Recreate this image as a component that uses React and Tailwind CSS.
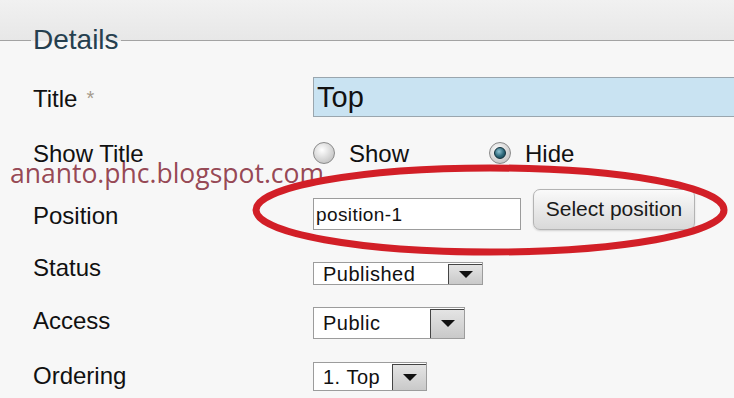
import React from 'react';

// ── Small form widgets ──────────────────────────────────────────────────────
function Radio({ checked }) {
  return (
    <span className="w-[22px] h-[22px] rounded-full border border-[#8a8a8a] bg-[radial-gradient(circle_at_40%_35%,#ffffff,#d6d6d6_55%,#b4b4b4)] flex items-center justify-center shrink-0">
      {checked && (
        <span className="w-[12px] h-[12px] rounded-full bg-[radial-gradient(circle_at_40%_35%,#8fc3d2,#2b6678_55%,#123a48)] border border-[#0f2f3a]" />
      )}
    </span>
  );
}

function Select({ value, width, height }) {
  return (
    <div
      className="flex items-stretch border border-[#9c9c9c] bg-white"
      style={{ width, height }}
    >
      <span className="flex-1 flex items-center pl-[9px] text-[20px] leading-none tracking-[0.5px] text-[#111]">
        {value}
      </span>
      <span className="w-[34px] flex items-center justify-center border-l border-t border-[#444] bg-[linear-gradient(#e4e4e4,#c9c9c9)] m-px mr-0 mb-0 border-r-0">
        <svg width="14" height="8" viewBox="0 0 14 8">
          <path d="M0 0 H14 L7 7 Z" fill="#111" />
        </svg>
      </span>
    </div>
  );
}

const label = 'w-[280px] shrink-0 text-[24px] leading-[28px] text-[#111]';

export default function App() {
  return (
    <div className="relative w-[734px] h-[398px] overflow-hidden bg-[#f7f7f7] font-['Liberation_Sans',Arial,sans-serif]">
      {/* ── Legend header ── */}
      <div className="h-[41px] flex items-end bg-[linear-gradient(#f1f1f1,#e7e7e7)]">
        <div className="w-[31px] h-px bg-[#a3a3a3]" />
        <div className="px-[2px] -mb-[15px] text-[28px] leading-[32px] text-[#26404f]">Details</div>
        <div className="flex-1 h-px bg-[#a3a3a3]" />
      </div>

      {/* ── Form rows ── */}
      <div className="pl-[33px] pt-[36px]">
        {/* Title */}
        <div className="h-[63px] flex items-start">
          <div className={label + ' mt-[8px] flex'}>
            Title
            <span className="ml-[9px] mt-[3px] text-[20px] leading-none text-[#a59a8c]">*</span>
          </div>
          <div className="flex-1 h-[40px] -mr-[2px] border border-[#9aa6ae] bg-[#c9e3f2] pl-[3px] flex items-center text-[29px] leading-none text-[#111]">
            Top
          </div>
        </div>

        {/* Show Title */}
        <div className="h-[49px] flex items-start">
          <div className={label}>Show Title</div>
          <div className="flex items-center mt-px">
            <Radio />
            <span className="ml-[14px] w-[140px] text-[24px] leading-[22px] pt-[2px] text-[#111]">Show</span>
            <Radio checked />
            <span className="ml-[14px] text-[24px] leading-[22px] pt-[2px] text-[#111]">Hide</span>
          </div>
        </div>

        {/* Position */}
        <div className="h-[65px] flex items-start">
          <div className={label + ' mt-[13px]'}>Position</div>
          <div className="mt-[9px] w-[208px] h-[32px] border border-[#9c9c9c] bg-white pl-[2px] flex items-center text-[19px] leading-none tracking-[0.4px] text-[#111]">
            position-1
          </div>
          <button className="ml-[12px] w-[162px] h-[41px] rounded-[7px] border border-[#b3b3b3] bg-[linear-gradient(#fafafa,#e9e9e9_50%,#d9d9d9)] shadow-[0_1px_2px_rgba(0,0,0,0.15)] text-[21px] leading-none text-[#1a1a1a] pb-[3px]">
            Select position
          </button>
        </div>

        {/* Status */}
        <div className="h-[53px] flex items-start">
          <div className={label}>Status</div>
          <div className="mt-[8px]">
            <Select value="Published" width={170} height={23} />
          </div>
        </div>

        {/* Access */}
        <div className="h-[55px] flex items-start">
          <div className={label}>Access</div>
          <Select value="Public" width={152} height={32} />
        </div>

        {/* Ordering */}
        <div className="flex items-start">
          <div className={label}>Ordering</div>
          <Select value="1. Top" width={114} height={29} />
        </div>
      </div>

      {/* ── Watermark & annotation overlay ── */}
      <div className="absolute left-[10px] top-[160px] font-['Open_Sans',sans-serif] text-[26.5px] leading-[26px] text-[#8a3140]/90 pointer-events-none">
        ananto.phc.blogspot.com
      </div>
      <svg className="absolute inset-0 pointer-events-none" width="734" height="398" viewBox="0 0 734 398">
        <ellipse cx="490" cy="210" rx="234" ry="42" fill="none" stroke="#d21f27" strokeWidth="7" />
      </svg>
    </div>
  );
}
